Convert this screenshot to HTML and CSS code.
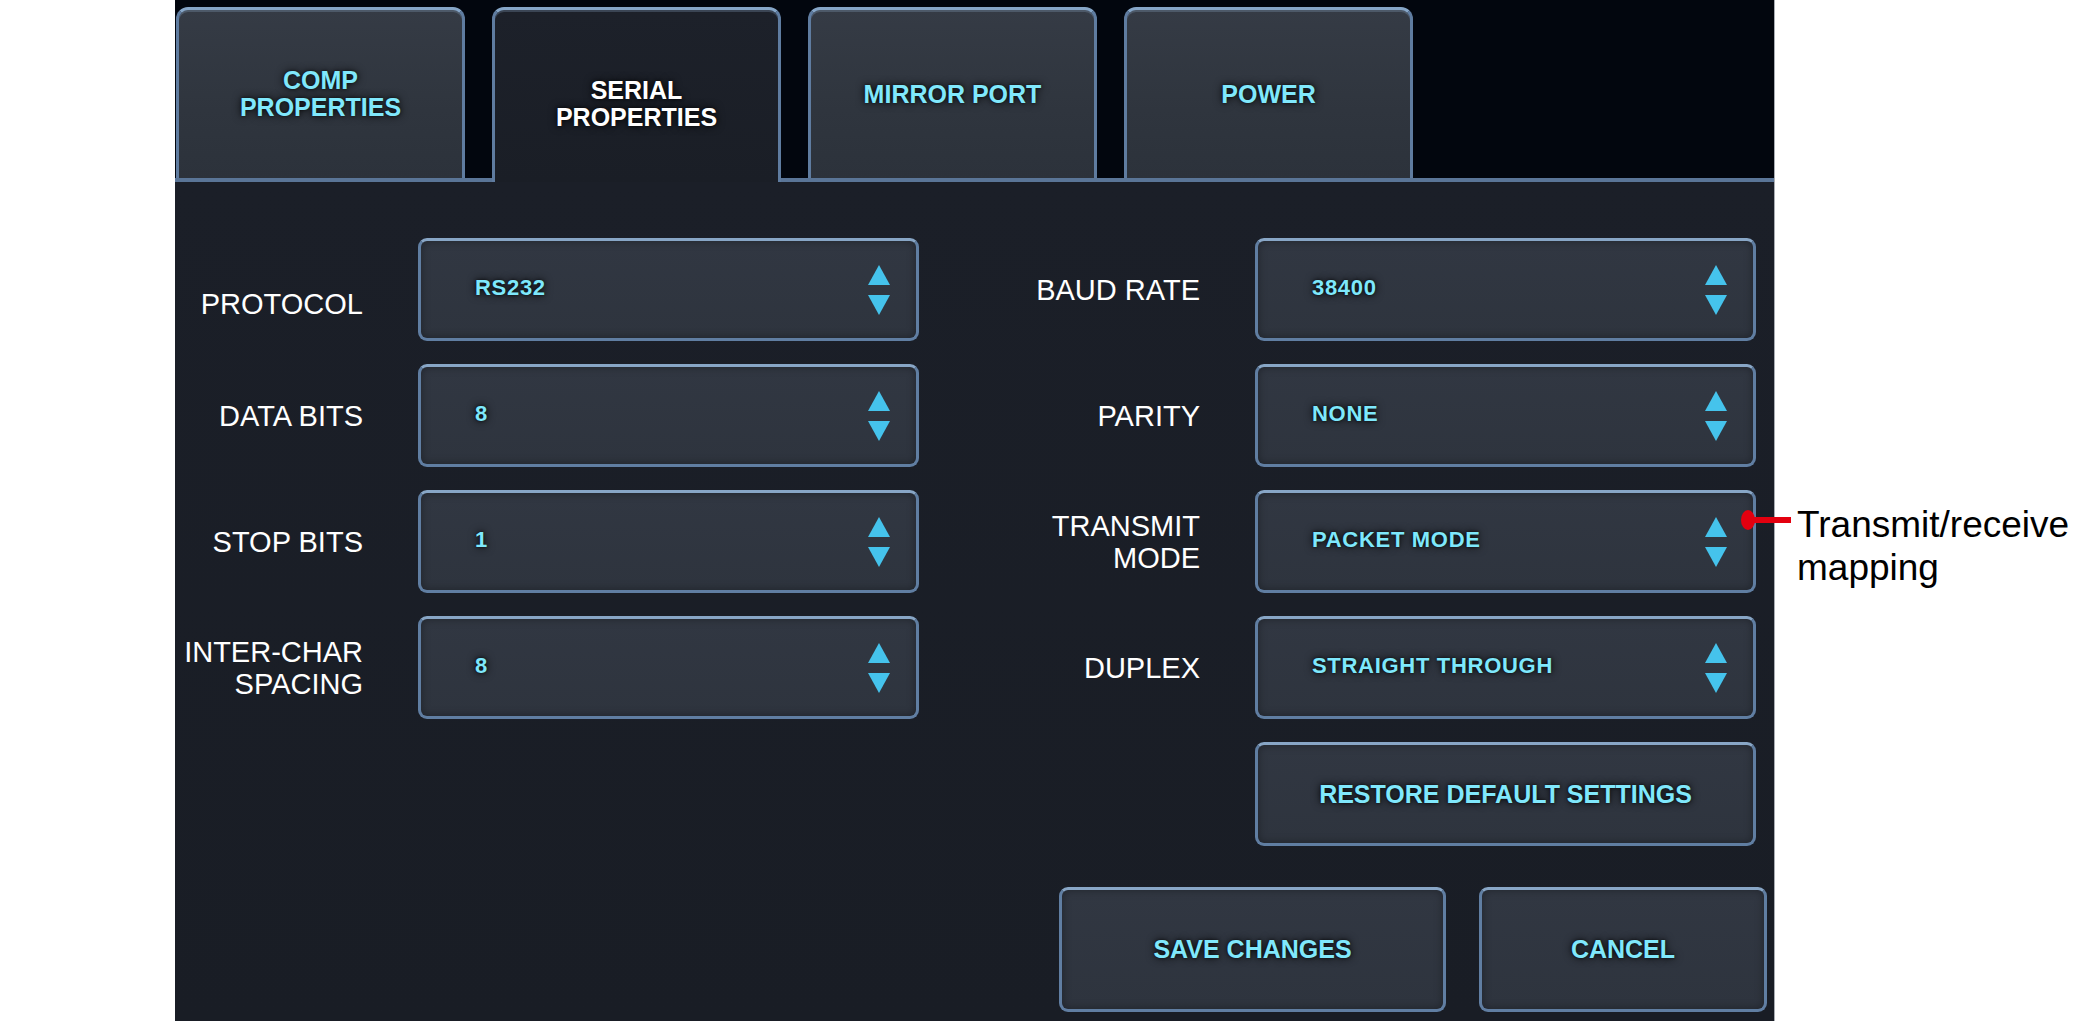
FILE: index.html
```html
<!DOCTYPE html>
<html lang="en">
<head>
<meta charset="utf-8">
<title>Serial Properties</title>
<link rel="stylesheet" href="styles.css">
</head>
<body>
<div class="screen">
  <div class="tabbar">
    <div class="tab">COMP<br>PROPERTIES</div>
    <div class="tab active">SERIAL<br>PROPERTIES</div>
    <div class="tab">MIRROR PORT</div>
    <div class="tab">POWER</div>
  </div>
  <div class="panel">
    <div class="grid">
      <div class="label label-low">PROTOCOL</div>
      <div class="field"><span class="value">RS232</span><svg class="spin" viewBox="0 0 22 50"><polygon points="11,0 22,20 0,20"/><polygon points="0,30 22,30 11,50"/></svg></div>
      <div class="label">BAUD RATE</div>
      <div class="field"><span class="value">38400</span><svg class="spin" viewBox="0 0 22 50"><polygon points="11,0 22,20 0,20"/><polygon points="0,30 22,30 11,50"/></svg></div>

      <div class="label">DATA BITS</div>
      <div class="field"><span class="value">8</span><svg class="spin" viewBox="0 0 22 50"><polygon points="11,0 22,20 0,20"/><polygon points="0,30 22,30 11,50"/></svg></div>
      <div class="label">PARITY</div>
      <div class="field"><span class="value">NONE</span><svg class="spin" viewBox="0 0 22 50"><polygon points="11,0 22,20 0,20"/><polygon points="0,30 22,30 11,50"/></svg></div>

      <div class="label">STOP BITS</div>
      <div class="field"><span class="value">1</span><svg class="spin" viewBox="0 0 22 50"><polygon points="11,0 22,20 0,20"/><polygon points="0,30 22,30 11,50"/></svg></div>
      <div class="label">TRANSMIT<br>MODE</div>
      <div class="field"><span class="value">PACKET MODE</span><svg class="spin" viewBox="0 0 22 50"><polygon points="11,0 22,20 0,20"/><polygon points="0,30 22,30 11,50"/></svg></div>

      <div class="label">INTER-CHAR<br>SPACING</div>
      <div class="field"><span class="value">8</span><svg class="spin" viewBox="0 0 22 50"><polygon points="11,0 22,20 0,20"/><polygon points="0,30 22,30 11,50"/></svg></div>
      <div class="label">DUPLEX</div>
      <div class="field"><span class="value">STRAIGHT THROUGH</span><svg class="spin" viewBox="0 0 22 50"><polygon points="11,0 22,20 0,20"/><polygon points="0,30 22,30 11,50"/></svg></div>

      <div class="btn restore">RESTORE DEFAULT SETTINGS</div>
    </div>
    <div class="actions">
      <div class="btn save">SAVE CHANGES</div>
      <div class="btn cancel">CANCEL</div>
    </div>
  </div>
</div>
<div class="callout">
  <div class="pin"><span class="pin-dot"></span><span class="pin-bar"></span></div>
  <div class="callout-text">Transmit/receive<br>mapping</div>
</div>
</body>
</html>
```
FILE: styles.css
```css
html, body {
  margin: 0;
  padding: 0;
  background: #ffffff;
}

body {
  font-family: "Liberation Sans", Arial, sans-serif;
  width: 2086px;
  height: 1021px;
  overflow: hidden;
}

.screen {
  margin-left: 175px;
  width: 1599px;
  height: 1021px;
  display: flex;
  flex-direction: column;
  background: #1a1e26;
  border-right: 1px solid #a9adb3;
  box-sizing: content-box;
}

/* ---------- tabs ---------- */
.tabbar {
  height: 178px;
  box-sizing: content-box;
  display: flex;
  align-items: flex-end;
  gap: 27px;
  padding-left: 1px;
  background: #02060e;
  border-bottom: 4px solid #5a7597;
}

.tab {
  width: 289px;
  height: 171px;
  box-sizing: border-box;
  display: flex;
  align-items: center;
  justify-content: center;
  text-align: center;
  font-weight: bold;
  font-size: 25px;
  line-height: 27px;
  color: #80e8fc;
  text-shadow: 0 0 8px rgba(0, 0, 0, 0.9), 0 0 3px rgba(0, 0, 0, 0.6);
  background: linear-gradient(180deg, #353b45 0%, #2f353e 60%, #2c323b 100%);
  border: 3px solid #5f7ca0;
  border-top-color: #86a6c8;
  border-bottom: none;
  border-radius: 12px 12px 0 0;
  box-shadow: inset 0 2px 0 rgba(150, 180, 210, 0.25);
}

.tab.active {
  height: 175px;
  margin-bottom: -4px;
  padding-top: 16px;
  color: #ffffff;
  background: linear-gradient(180deg, #1d212a 0%, #1a1e26 100%);
  position: relative;
  z-index: 1;
}

/* ---------- panel ---------- */
.panel {
  flex: 1;
  padding-top: 56px;
  background: linear-gradient(180deg, #1b1f28 0%, #191d25 100%);
}

.grid {
  display: grid;
  grid-template-columns: 188px 501px 226px 501px;
  grid-auto-rows: 103px;
  column-gap: 55px;
  row-gap: 23px;
}

.label {
  display: flex;
  align-items: center;
  justify-content: flex-end;
  text-align: right;
  font-size: 29px;
  line-height: 32px;
  color: #ffffff;
}

.label-low {
  padding-top: 28px;
}

.field, .btn {
  box-sizing: border-box;
  background: linear-gradient(180deg, #313742 0%, #2e343e 100%);
  border: 3px solid #607ea2;
  border-top-color: #88a6c6;
  border-radius: 9px;
  box-shadow: inset 0 0 8px rgba(0, 0, 0, 0.35);
}

.field {
  display: flex;
  align-items: center;
  padding: 0 26px 0 54px;
}

.value {
  flex: 1;
  margin-bottom: 3px;
  font-weight: bold;
  font-size: 22px;
  letter-spacing: 0.7px;
  color: #7ee8fc;
  text-shadow: 0 0 8px rgba(0, 0, 0, 0.95), 0 0 3px rgba(0, 0, 0, 0.7);
}

.spin {
  width: 22px;
  height: 50px;
  fill: #45c3ec;
}

.btn {
  display: flex;
  align-items: center;
  justify-content: center;
  font-weight: bold;
  font-size: 25px;
  color: #80e8fc;
  text-shadow: 0 0 8px rgba(0, 0, 0, 0.95), 0 0 3px rgba(0, 0, 0, 0.7);
}

.restore {
  grid-column: 4;
  height: 104px;
}

.actions {
  display: flex;
  justify-content: flex-end;
  gap: 33px;
  margin-top: 42px;
  padding-right: 7px;
}

.save {
  width: 387px;
  height: 125px;
}

.cancel {
  width: 288px;
  height: 125px;
}

/* ---------- annotation ---------- */
.callout {
  position: absolute;
  left: 1741px;
  top: 503px;
  display: flex;
  align-items: flex-start;
}

.pin {
  display: flex;
  align-items: center;
  margin-top: 7px;
}

.pin-dot {
  width: 14px;
  height: 20px;
  border-radius: 50%;
  background: #e3000f;
}

.pin-bar {
  width: 39px;
  height: 6px;
  margin-left: -3px;
  background: #e3000f;
}

.callout-text {
  margin-left: 6px;
  font-size: 37px;
  line-height: 43px;
  color: #000000;
}
```
